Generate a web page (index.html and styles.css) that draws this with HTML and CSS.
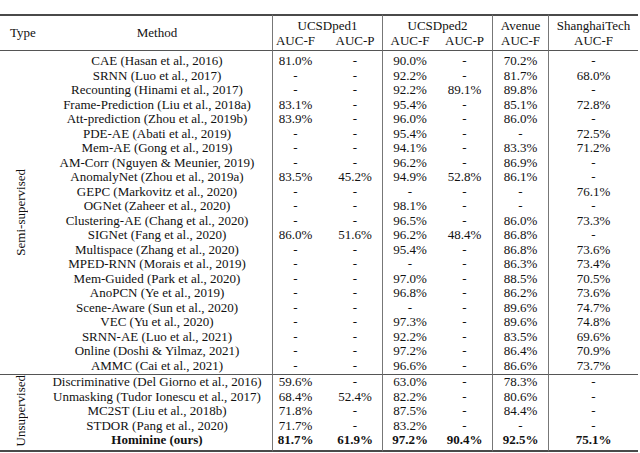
FILE: index.html
```html
<!DOCTYPE html>
<html>
<head>
<meta charset="utf-8">
<link rel="stylesheet" href="styles.css">
</head>
<body>
<div class="page">
<table class="results">
<colgroup>
<col class="c-type"><col class="c-method"><col class="c-p1f"><col class="c-p1p"><col class="c-p2f"><col class="c-p2p"><col class="c-ave"><col class="c-sh">
</colgroup>
<thead>
<tr class="h1">
<th rowspan="2" class="type-h">Type</th>
<th rowspan="2" class="method-h">Method</th>
<th colspan="2" class="v">UCSDped1</th>
<th colspan="2" class="v">UCSDped2</th>
<th class="v">Avenue</th>
<th class="v">ShanghaiTech</th>
</tr>
<tr class="h2">
<th>AUC-F</th><th>AUC-P</th><th>AUC-F</th><th>AUC-P</th><th>AUC-F</th><th>AUC-F</th>
</tr>
</thead>
<tbody class="semi">
<tr class="first"><td rowspan="22" class="type"><span class="vtext">Semi-supervised</span></td><td class="m">CAE (Hasan et al., 2016)</td><td>81.0%</td><td>-</td><td>90.0%</td><td>-</td><td>70.2%</td><td>-</td></tr>
<tr><td class="m">SRNN (Luo et al., 2017)</td><td>-</td><td>-</td><td>92.2%</td><td>-</td><td>81.7%</td><td>68.0%</td></tr>
<tr><td class="m">Recounting (Hinami et al., 2017)</td><td>-</td><td>-</td><td>92.2%</td><td>89.1%</td><td>89.8%</td><td>-</td></tr>
<tr><td class="m">Frame-Prediction (Liu et al., 2018a)</td><td>83.1%</td><td>-</td><td>95.4%</td><td>-</td><td>85.1%</td><td>72.8%</td></tr>
<tr><td class="m">Att-prediction (Zhou et al., 2019b)</td><td>83.9%</td><td>-</td><td>96.0%</td><td>-</td><td>86.0%</td><td>-</td></tr>
<tr><td class="m">PDE-AE (Abati et al., 2019)</td><td>-</td><td>-</td><td>95.4%</td><td>-</td><td>-</td><td>72.5%</td></tr>
<tr><td class="m">Mem-AE (Gong et al., 2019)</td><td>-</td><td>-</td><td>94.1%</td><td>-</td><td>83.3%</td><td>71.2%</td></tr>
<tr><td class="m">AM-Corr (Nguyen &amp; Meunier, 2019)</td><td>-</td><td>-</td><td>96.2%</td><td>-</td><td>86.9%</td><td>-</td></tr>
<tr><td class="m">AnomalyNet (Zhou et al., 2019a)</td><td>83.5%</td><td>45.2%</td><td>94.9%</td><td>52.8%</td><td>86.1%</td><td>-</td></tr>
<tr><td class="m">GEPC (Markovitz et al., 2020)</td><td>-</td><td>-</td><td>-</td><td>-</td><td>-</td><td>76.1%</td></tr>
<tr><td class="m">OGNet (Zaheer et al., 2020)</td><td>-</td><td>-</td><td>98.1%</td><td>-</td><td>-</td><td>-</td></tr>
<tr><td class="m">Clustering-AE (Chang et al., 2020)</td><td>-</td><td>-</td><td>96.5%</td><td>-</td><td>86.0%</td><td>73.3%</td></tr>
<tr><td class="m">SIGNet (Fang et al., 2020)</td><td>86.0%</td><td>51.6%</td><td>96.2%</td><td>48.4%</td><td>86.8%</td><td>-</td></tr>
<tr><td class="m">Multispace (Zhang et al., 2020)</td><td>-</td><td>-</td><td>95.4%</td><td>-</td><td>86.8%</td><td>73.6%</td></tr>
<tr><td class="m">MPED-RNN (Morais et al., 2019)</td><td>-</td><td>-</td><td>-</td><td>-</td><td>86.3%</td><td>73.4%</td></tr>
<tr><td class="m">Mem-Guided (Park et al., 2020)</td><td>-</td><td>-</td><td>97.0%</td><td>-</td><td>88.5%</td><td>70.5%</td></tr>
<tr><td class="m">AnoPCN (Ye et al., 2019)</td><td>-</td><td>-</td><td>96.8%</td><td>-</td><td>86.2%</td><td>73.6%</td></tr>
<tr><td class="m">Scene-Aware (Sun et al., 2020)</td><td>-</td><td>-</td><td>-</td><td>-</td><td>89.6%</td><td>74.7%</td></tr>
<tr><td class="m">VEC (Yu et al., 2020)</td><td>-</td><td>-</td><td>97.3%</td><td>-</td><td>89.6%</td><td>74.8%</td></tr>
<tr><td class="m">SRNN-AE (Luo et al., 2021)</td><td>-</td><td>-</td><td>92.2%</td><td>-</td><td>83.5%</td><td>69.6%</td></tr>
<tr><td class="m">Online (Doshi &amp; Yilmaz, 2021)</td><td>-</td><td>-</td><td>97.2%</td><td>-</td><td>86.4%</td><td>70.9%</td></tr>
<tr class="last"><td class="m">AMMC (Cai et al., 2021)</td><td>-</td><td>-</td><td>96.6%</td><td>-</td><td>86.6%</td><td>73.7%</td></tr>
</tbody>
<tbody class="unsup">
<tr class="first"><td rowspan="5" class="type"><span class="vtext">Unsupervised</span></td><td class="m">Discriminative (Del Giorno et al., 2016)</td><td>59.6%</td><td>-</td><td>63.0%</td><td>-</td><td>78.3%</td><td>-</td></tr>
<tr><td class="m">Unmasking (Tudor Ionescu et al., 2017)</td><td>68.4%</td><td>52.4%</td><td>82.2%</td><td>-</td><td>80.6%</td><td>-</td></tr>
<tr><td class="m">MC2ST (Liu et al., 2018b)</td><td>71.8%</td><td>-</td><td>87.5%</td><td>-</td><td>84.4%</td><td>-</td></tr>
<tr><td class="m">STDOR (Pang et al., 2020)</td><td>71.7%</td><td>-</td><td>83.2%</td><td>-</td><td>-</td><td>-</td></tr>
<tr class="last ours"><td class="m">Hominine (ours)</td><td>81.7%</td><td>61.9%</td><td>97.2%</td><td>90.4%</td><td>92.5%</td><td>75.1%</td></tr>
</tbody>
</table>
</div>
</body>
</html>
```
FILE: styles.css
```css
html, body {
  margin: 0;
  padding: 0;
  background: #ffffff;
}

body {
  font-family: "Liberation Serif", "Times New Roman", serif;
  font-size: 13px;
  color: #111111;
}

.page {
  padding-top: 14px;
}

.results {
  border-collapse: separate;
  border-spacing: 0;
  table-layout: fixed;
  width: 638px;
}

.c-type { width: 42px; }
.c-method { width: 230px; }
.c-p1f { width: 46px; }
.c-p1p { width: 64px; }
.c-p2f { width: 55px; }
.c-p2p { width: 55px; }
.c-ave { width: 56px; }
.c-sh { width: 90px; }

.results th,
.results td {
  padding: 0;
  font-weight: normal;
  text-align: center;
  white-space: nowrap;
  line-height: 14.5px;
  vertical-align: middle;
}

/* header */
.h1 th {
  border-top: 2px solid #4a4a4a;
  padding-top: 3px;
}
.h1 th.type-h,
.h1 th.method-h {
  padding-top: 0;
  border-bottom: 1px solid #555;
}
.h1 th.type-h {
  text-align: left;
  padding-left: 10px;
}
.h2 th {
  padding-bottom: 2px;
  border-bottom: 1px solid #555;
}

/* vertical rules */
.h1 th.v,
.h2 th:nth-last-child(6),
.h2 th:nth-last-child(4),
.h2 th:nth-last-child(2),
.h2 th:nth-last-child(1),
tbody td:nth-last-child(6),
tbody td:nth-last-child(4),
tbody td:nth-last-child(2),
tbody td:nth-last-child(1) {
  border-left: 1px solid #777;
}

.h2 th:nth-last-child(5),
tbody td:nth-last-child(5) {
  padding-left: 10px;
}

/* semi-supervised group */
.semi tr.first td {
  padding-top: 3px;
}
.semi tr.last td {
  padding-bottom: 1px;
}
.semi td.type {
  padding: 0;
}

/* unsupervised group */
.unsup td {
  line-height: 14px;
}
.unsup tr.first td {
  border-top: 1px solid #555;
}
.unsup tr.last td,
.unsup td.type {
  border-bottom: 2px solid #4a4a4a;
}
.unsup tr.last td {
  padding-bottom: 2px;
}
.unsup td.type {
  padding: 0;
}

.ours td {
  font-weight: bold;
}

.vtext {
  display: inline-block;
  writing-mode: vertical-rl;
  transform: rotate(180deg);
  line-height: 14px;
}
```
